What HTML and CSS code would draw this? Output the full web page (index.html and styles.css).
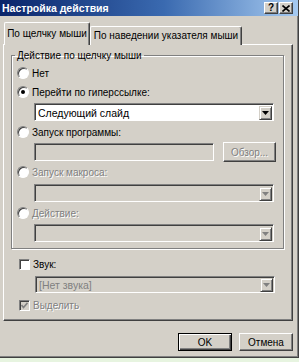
FILE: index.html
```html
<!DOCTYPE html>
<html lang="ru">
<head>
    <meta charset="UTF-8">
    <title>Настройка действия</title>
    <link rel="stylesheet" href="styles.css">
</head>
<body>
    <div class="dialog">
        <div class="titlebar">
            <span class="title">Настройка действия</span>
            <div class="caption-buttons">
                <span class="cap-btn help">?</span>
                <span class="cap-btn close">
                    <svg width="8" height="7" viewBox="0 0 8 7"><path d="M0.5 0.5 L7.5 6.5 M7.5 0.5 L0.5 6.5" stroke="#000" stroke-width="1.6"/></svg>
                </span>
            </div>
        </div>

        <div class="tabs">
            <div class="tab active tab-click">По щелчку мыши</div>
            <div class="tab tab-hover">По наведении указателя мыши</div>
        </div>

        <div class="panel">
            <fieldset class="group">
                <legend>Действие по щелчку мыши</legend>

                <div class="opt row1"><span class="radio"></span>Нет</div>
                <div class="opt row2"><span class="radio checked"></span>Перейти по гиперссылке:</div>
                <div class="combo combo-link">
                    <span class="combo-text">Следующий слайд</span>
                    <span class="arrow-btn"><svg width="7" height="4" viewBox="0 0 7 4"><path d="M0 0 H7 L3.5 4 Z" fill="#000"/></svg></span>
                </div>

                <div class="opt row3"><span class="radio"></span>Запуск программы:</div>
                <div class="program-row">
                    <span class="textbox"></span>
                    <span class="button browse">Обзор...</span>
                </div>

                <div class="opt row4 disabled"><span class="radio"></span>Запуск макроса:</div>
                <div class="combo combo-off combo-macro">
                    <span class="combo-text"></span>
                    <span class="arrow-btn"><svg width="7" height="4" viewBox="0 0 7 4"><path d="M0 0 H7 L3.5 4 Z" fill="#808080"/></svg></span>
                </div>

                <div class="opt row5 disabled"><span class="radio"></span>Действие:</div>
                <div class="combo combo-off combo-action">
                    <span class="combo-text"></span>
                    <span class="arrow-btn"><svg width="7" height="4" viewBox="0 0 7 4"><path d="M0 0 H7 L3.5 4 Z" fill="#808080"/></svg></span>
                </div>
            </fieldset>

            <div class="opt sound"><span class="checkbox"></span>Звук:</div>
            <div class="combo combo-off combo-sound">
                <span class="combo-text">[Нет звука]</span>
                <span class="arrow-btn"><svg width="7" height="4" viewBox="0 0 7 4"><path d="M0 0 H7 L3.5 4 Z" fill="#808080"/></svg></span>
            </div>
            <div class="opt highlight disabled">
                <span class="checkbox checked-off">
                    <svg width="7" height="7" viewBox="0 0 7 7"><path d="M0.5 3 L2.5 5.5 L6.5 0.8" stroke="#808080" stroke-width="1.6" fill="none"/></svg>
                </span>Выделить
            </div>
        </div>

        <div class="footer">
            <span class="button default">OK</span>
            <span class="button">Отмена</span>
        </div>
    </div>
</body>
</html>
```

FILE: styles.css
```css
body {
    margin: 0;
    background-color: #e7f4e0;
    font-family: "Liberation Sans", Arial, sans-serif;
    font-size: 10px;
    color: #000;
}

.dialog {
    width: 299px;
    height: 358px;
    box-sizing: border-box;
    background-color: #d4d0c8;
    border-right: 1px solid #404040;
    border-bottom: 1px solid #404040;
    box-shadow: inset -1px -1px 0 #808080;
    white-space: nowrap;
}

.titlebar {
    height: 16px;
    display: flex;
    align-items: center;
    justify-content: space-between;
    padding: 0 5px 0 2px;
    background: linear-gradient(to right, #0a246a, #3a6ab0 55%, #a6caf0);
}

.title {
    color: #fff;
    font-weight: bold;
    font-size: 10.5px;
}

.caption-buttons {
    display: flex;
    gap: 1px;
}

.cap-btn {
    width: 14px;
    height: 12px;
    box-sizing: border-box;
    display: flex;
    align-items: center;
    justify-content: center;
    background-color: #d4d0c8;
    border: 1px solid;
    border-color: #fff #404040 #404040 #fff;
    box-shadow: inset -1px -1px 0 #808080;
    font-weight: bold;
    font-size: 10px;
    line-height: 10px;
}

/* tabs */
.tabs {
    display: flex;
    align-items: flex-end;
    height: 23px;
    margin-top: 6px;
    margin-bottom: -1px;
    padding-left: 4px;
    position: relative;
}

.tab {
    height: 19px;
    box-sizing: border-box;
    display: flex;
    align-items: center;
    justify-content: center;
    border: 1px solid;
    border-bottom: none;
    border-color: #fff #404040 #fff #fff;
    border-radius: 2px 2px 0 0;
    box-shadow: inset -1px 0 0 #808080;
    background-color: #d4d0c8;
}

.tab.active {
    height: 23px;
    padding-bottom: 2px;
    position: relative;
    z-index: 1;
}

.tab-click {
    width: 86px;
}

.tab-hover {
    width: 152px;
    padding-bottom: 1px;
}

.panel {
    margin-left: 3px;
    width: 290px;
    height: 277px;
    box-sizing: border-box;
    border: 1px solid;
    border-color: #fff #404040 #404040 #fff;
    box-shadow: inset -1px -1px 0 #808080;
}

.group {
    margin: 4px 0 0 7px;
    width: 273px;
    box-sizing: border-box;
    padding: 0 0 6px 6px;
    border: 1px solid #808080;
    box-shadow: 1px 1px 0 #fff, inset 1px 1px 0 #fff;
}

.group legend {
    margin-left: -3px;
    padding: 0 2px;
    line-height: 13px;
}

.opt {
    display: flex;
    align-items: center;
    height: 14px;
}

.opt.disabled {
    color: #808080;
    text-shadow: 1px 1px 0 #fff;
}

.row1 { margin-top: 4px; }
.row2 { margin-top: 5px; }
.row3 { margin-top: 4px; }
.row4 { margin-top: 4px; }
.row5 { margin-top: 4px; }

.radio {
    width: 12px;
    height: 12px;
    box-sizing: border-box;
    border-radius: 50%;
    margin-right: 3px;
    margin-left: -1px;
    background-color: #fff;
    border: 1px solid;
    border-color: #808080 #fff #fff #808080;
    box-shadow: inset 1px 1px 0 #404040;
    display: flex;
    align-items: center;
    justify-content: center;
}

.radio.checked::after {
    content: "";
    width: 4px;
    height: 4px;
    border-radius: 50%;
    background-color: #000;
}

.checkbox {
    width: 11px;
    height: 11px;
    box-sizing: border-box;
    margin-right: 3px;
    background-color: #fff;
    border: 1px solid;
    border-color: #808080 #fff #fff #808080;
    box-shadow: inset 1px 1px 0 #404040;
    display: flex;
    align-items: center;
    justify-content: center;
}

.checkbox.checked-off {
    background-color: #d4d0c8;
}

/* combo boxes and text fields */
.combo,
.textbox {
    display: flex;
    align-items: center;
    justify-content: space-between;
    height: 18px;
    box-sizing: border-box;
    border: 1px solid;
    border-color: #808080 #fff #fff #808080;
    box-shadow: inset 1px 1px 0 #404040;
    background-color: #fff;
}

.combo {
    width: 240px;
    margin-left: 16px;
    padding: 1px 1px 0 2px;
}

.combo-off {
    background-color: #d4d0c8;
}

.combo-text {
    padding-left: 1px;
    font-size: 10.5px;
}

.combo-link { margin-top: 4px; }
.combo-macro { margin-top: 5px; }
.combo-action { margin-top: 4px; }

.arrow-btn {
    width: 13px;
    height: 14px;
    box-sizing: border-box;
    display: flex;
    align-items: center;
    justify-content: center;
    background-color: #d4d0c8;
    border: 1px solid;
    border-color: #d4d0c8 #404040 #404040 #d4d0c8;
    box-shadow: inset 1px 1px 0 #fff, inset -1px -1px 0 #808080;
}

.program-row {
    display: flex;
    align-items: center;
    gap: 9px;
    height: 18px;
    margin: 4px 0 0 16px;
}

.textbox {
    width: 180px;
    background-color: #d4d0c8;
}

.button {
    display: flex;
    align-items: center;
    justify-content: center;
    box-sizing: border-box;
    border: 1px solid;
    border-color: #fff #404040 #404040 #fff;
    box-shadow: inset -1px -1px 0 #808080;
    background-color: #d4d0c8;
}

.browse {
    width: 53px;
    height: 20px;
    color: #808080;
    text-shadow: 1px 1px 0 #fff;
}

.sound {
    margin: 8px 0 0 15px;
}

.combo-sound {
    margin: 5px 0 0 31px;
    height: 17px;
    color: #808080;
}

.highlight {
    margin: 5px 0 0 15px;
}

.footer {
    display: flex;
    justify-content: flex-end;
    gap: 7px;
    margin-top: 12px;
    padding-right: 5px;
}

.footer .button {
    width: 54px;
    height: 18px;
}

.footer .default {
    border: 1px solid #000;
    box-shadow: inset 1px 1px 0 #fff, inset -1px -1px 0 #404040, inset -2px -2px 0 #808080;
}
```
